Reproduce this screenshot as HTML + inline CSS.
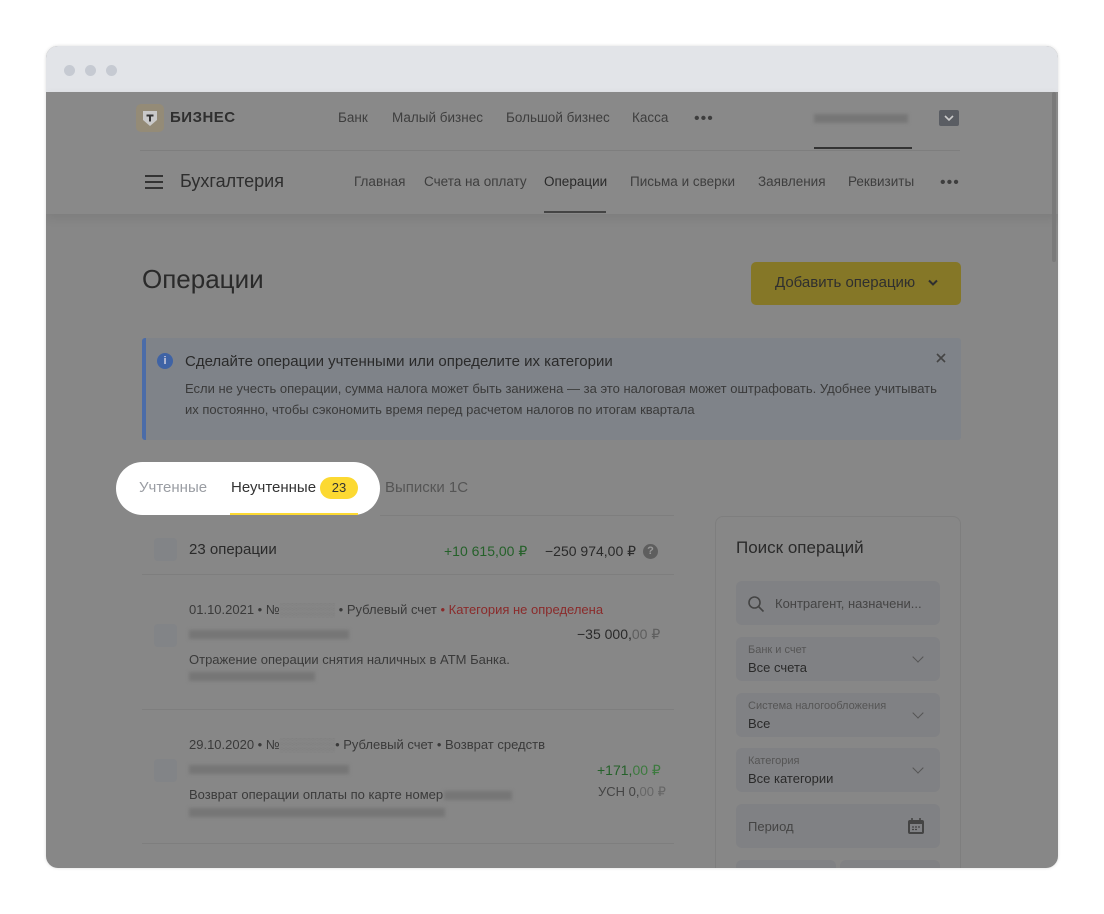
<!DOCTYPE html>
<html><head><meta charset="utf-8"><style>
*{margin:0;padding:0;box-sizing:border-box}
body{width:1104px;height:914px;background:#fff;font-family:"Liberation Sans","Noto Sans CJK SC",sans-serif;position:relative;overflow:hidden;color:#2a2a2a}
.win{position:absolute;left:46px;top:46px;width:1012px;height:822px;border-radius:12px;overflow:hidden;background:#878787;box-shadow:0 0 3px rgba(0,0,0,.15)}
.bar{position:absolute;left:0;top:0;width:100%;height:46px;background:#e2e4e8}
.dot{position:absolute;top:19px;width:11px;height:11px;border-radius:50%;background:#c6cad2}
.a{position:absolute;white-space:nowrap}
.hdr{position:absolute;left:0;top:46px;width:100%;height:122px;background:#898989;box-shadow:0 4px 10px rgba(0,0,0,.08)}
.nav{font-size:13.5px;color:#3e3e3e}
.blur{background:#767676;filter:blur(1.5px);position:absolute;height:9px}
.fld{position:absolute;left:690px;width:204px;background:#808184;border-radius:6px}
.chev{position:absolute;right:18px;top:16px;width:8px;height:8px;border-right:1.6px solid #555;border-bottom:1.6px solid #555;transform:rotate(45deg)}
</style></head><body>
<div class="win">
<div class="bar"></div>
<div class="dot" style="left:18px"></div><div class="dot" style="left:39px"></div><div class="dot" style="left:60px"></div>
<div class="hdr"></div>
<div class="a" style="left:90px;top:58px;width:28px;height:28px;border-radius:5px;background:#948b77"></div>
<svg class="a" style="left:96px;top:64px" width="16" height="17" viewBox="0 0 16 17"><path d="M1 1h14v9l-7 6-7-6z" fill="#c9c9c9"/><path d="M4.5 4.5h7v2h-2.5v5h-2v-5h-2.5z" fill="#333"/></svg>
<div class="a" style="left:124px;top:63px;font-size:15px;font-weight:bold;color:#2f2f2f;letter-spacing:.5px">БИЗНЕС</div>
<div class="a nav" style="left:292px;top:64px">Банк</div>
<div class="a nav" style="left:346px;top:64px">Малый бизнес</div>
<div class="a nav" style="left:460px;top:64px">Большой бизнес</div>
<div class="a nav" style="left:586px;top:64px">Касса</div>
<div class="a nav" style="left:648px;top:64px;font-size:16px;letter-spacing:1px">•••</div>
<div class="blur" style="left:768px;top:68px;width:94px"></div>
<div class="a" style="left:768px;top:101px;width:98px;height:2px;background:#333"></div>
<div class="a" style="left:94px;top:104px;width:820px;height:1px;background:#7e7e7e"></div>
<div class="a" style="left:893px;top:64px;width:20px;height:16px;border-radius:2px;background:#5a5d63"></div>
<svg class="a" style="left:898px;top:68px" width="10" height="8"><path d="M1 2l4 4 4-4" stroke="#ccc" stroke-width="1.6" fill="none"/></svg>
<div class="a" style="left:99px;top:129px;width:18px;height:2px;background:#333;box-shadow:0 6px 0 #333,0 12px 0 #333"></div>
<div class="a" style="left:134px;top:125px;font-size:18px;color:#2e2e2e">Бухгалтерия</div>
<div class="a nav" style="left:308px;top:128px">Главная</div>
<div class="a nav" style="left:378px;top:128px">Счета на оплату</div>
<div class="a nav" style="left:498px;top:128px;color:#2a2a2a">Операции</div>
<div class="a" style="left:498px;top:165px;width:62px;height:2px;background:#444"></div>
<div class="a nav" style="left:584px;top:128px">Письма и сверки</div>
<div class="a nav" style="left:712px;top:128px">Заявления</div>
<div class="a nav" style="left:802px;top:128px">Реквизиты</div>
<div class="a nav" style="left:894px;top:128px;font-size:16px;letter-spacing:1px">•••</div>
<div class="a" style="left:1006px;top:46px;width:4px;height:170px;background:#7a7a7a;border-radius:2px"></div>
<div class="a" style="left:96px;top:218px;font-size:26px;color:#2a2a2a">Операции</div>
<div class="a" style="left:705px;top:216px;width:210px;height:43px;background:#857727;border-radius:5px"></div>
<div class="a" style="left:729px;top:228px;font-size:15px;color:#2f2f2f">Добавить операцию</div>
<svg class="a" style="left:882px;top:233px" width="10" height="8"><path d="M1 1.5l4 4 4-4" stroke="#2f2f2f" stroke-width="2" fill="none"/></svg>
<div class="a" style="left:96px;top:292px;width:819px;height:102px;background:#7f8389;border-left:4px solid #4b6ca8;border-radius:3px"></div>
<div class="a" style="left:111px;top:307px;width:16px;height:16px;border-radius:50%;background:#3f63a5;color:#ccd;font-size:11px;font-weight:bold;text-align:center;line-height:16px">i</div>
<div class="a" style="left:139px;top:307px;font-size:15px;color:#2a2a2a">Сделайте операции учтенными или определите их категории</div>
<div class="a" style="left:139px;top:332px;font-size:13px;color:#3a3a3a;line-height:21px">Если не учесть операции, сумма налога может быть занижена — за это налоговая может оштрафовать. Удобнее учитывать<br>их постоянно, чтобы сэкономить время перед расчетом налогов по итогам квартала</div>
<svg class="a" style="left:890px;top:307px" width="10" height="10"><path d="M1 1l8 8M9 1l-8 8" stroke="#444" stroke-width="1.6"/></svg>
<div class="a" style="left:70px;top:416px;width:264px;height:53px;background:#fff;border-radius:27px"></div>
<div class="a" style="left:93px;top:433px;font-size:15px;color:#9a9da3">Учтенные</div>
<div class="a" style="left:185px;top:433px;font-size:15px;color:#333">Неучтенные</div>
<div class="a" style="left:274px;top:431px;width:38px;height:22px;background:#fcd932;border-radius:11px;font-size:13px;text-align:center;line-height:22px;color:#333">23</div>
<div class="a" style="left:184px;top:467px;width:128px;height:2px;background:#fcd932"></div>
<div class="a" style="left:339px;top:433px;font-size:15px;color:#555">Выписки 1С</div>
<div class="a" style="left:334px;top:469px;width:294px;height:1px;background:#7e7e7e"></div>
<div class="a" style="left:108px;top:492px;width:23px;height:23px;border-radius:4px;background:#828487"></div>
<div class="a" style="left:143px;top:495px;font-size:15px;color:#2a2a2a">23 операции</div>
<div class="a" style="left:398px;top:497px;font-size:14px;color:#25612a">+10 615,00 ₽</div>
<div class="a" style="left:499px;top:497px;font-size:14px;color:#2a2a2a">−250 974,00 ₽</div>
<div class="a" style="left:597px;top:498px;width:15px;height:15px;border-radius:50%;background:#5e5e5e;color:#999;font-size:11px;font-weight:bold;text-align:center;line-height:15px">?</div>
<div class="a" style="left:96px;top:528px;width:532px;height:1px;background:#7e7e7e"></div>
<div class="a" style="left:143px;top:556px;font-size:13px;color:#3a3a3a">01.10.2021 • №<span style="color:#7c7c7c">▒▒▒▒▒▒</span> • Рублевый счет <span style="color:#8a2b2b">• Категория не определена</span></div>
<div class="a" style="left:108px;top:578px;width:23px;height:23px;border-radius:4px;background:#828487"></div>
<div class="blur" style="left:143px;top:584px;width:160px"></div>
<div class="a" style="left:531px;top:580px;font-size:14px;color:#2a2a2a">−35 000,<span style="color:#5e5e5e">00 ₽</span></div>
<div class="a" style="left:143px;top:606px;font-size:13px;color:#3a3a3a">Отражение операции снятия наличных в АТМ Банка.</div>
<div class="blur" style="left:143px;top:626px;width:126px"></div>
<div class="a" style="left:96px;top:663px;width:532px;height:1px;background:#7e7e7e"></div>
<div class="a" style="left:143px;top:691px;font-size:13px;color:#3a3a3a">29.10.2020 • №<span style="color:#7c7c7c">▒▒▒▒▒▒</span>• Рублевый счет • Возврат средств</div>
<div class="a" style="left:108px;top:713px;width:23px;height:23px;border-radius:4px;background:#828487"></div>
<div class="blur" style="left:143px;top:719px;width:160px"></div>
<div class="a" style="left:551px;top:716px;font-size:14px;color:#25612a">+171,<span style="color:#3c7a3e">00 ₽</span></div>
<div class="a" style="left:552px;top:738px;font-size:13px;color:#444">УСН 0,<span style="color:#666">00 ₽</span></div>
<div class="a" style="left:143px;top:741px;font-size:13px;color:#3a3a3a">Возврат операции оплаты по карте номер</div>
<div class="blur" style="left:398px;top:745px;width:68px"></div>
<div class="blur" style="left:143px;top:762px;width:256px"></div>
<div class="a" style="left:96px;top:797px;width:532px;height:1px;background:#7e7e7e"></div>
<div class="a" style="left:669px;top:470px;width:246px;height:380px;border:1px solid #7e7e7e;border-radius:8px"></div>
<div class="a" style="left:690px;top:492px;font-size:17px;color:#2a2a2a">Поиск операций</div>
<div class="fld" style="top:535px;height:44px"></div>
<svg class="a" style="left:701px;top:549px" width="18" height="18"><circle cx="7.5" cy="7.5" r="5.5" stroke="#444" stroke-width="1.6" fill="none"/><path d="M11.5 11.5l5 5" stroke="#444" stroke-width="1.6"/></svg>
<div class="a" style="left:729px;top:550px;font-size:13px;color:#444">Контрагент, назначени...</div>
<div class="fld" style="top:591px;height:44px"><div class="chev"></div></div>
<div class="a" style="left:702px;top:598px;font-size:11px;color:#555">Банк и счет</div>
<div class="a" style="left:702px;top:614px;font-size:13px;color:#2a2a2a">Все счета</div>
<div class="fld" style="top:647px;height:44px"><div class="chev"></div></div>
<div class="a" style="left:702px;top:654px;font-size:11px;color:#555">Система налогообложения</div>
<div class="a" style="left:702px;top:670px;font-size:13px;color:#2a2a2a">Все</div>
<div class="fld" style="top:702px;height:44px"><div class="chev"></div></div>
<div class="a" style="left:702px;top:709px;font-size:11px;color:#555">Категория</div>
<div class="a" style="left:702px;top:725px;font-size:13px;color:#2a2a2a">Все категории</div>
<div class="fld" style="top:758px;height:44px"></div>
<div class="a" style="left:702px;top:773px;font-size:13px;color:#444">Период</div>
<svg class="a" style="left:861px;top:771px" width="18" height="18"><rect x="1" y="3" width="16" height="14" rx="2" fill="#444"/><rect x="3" y="7" width="12" height="8" fill="#808184"/><path d="M5 1v4M13 1v4" stroke="#444" stroke-width="1.6"/><path d="M5 10h2M8 10h2M11 10h2M5 12.5h2M8 12.5h2" stroke="#444" stroke-width="1.2"/></svg>
<div class="a" style="left:690px;top:814px;width:100px;height:20px;background:#808184;border-radius:6px"></div>
<div class="a" style="left:794px;top:814px;width:100px;height:20px;background:#808184;border-radius:6px"></div>
</div>
</body></html>
